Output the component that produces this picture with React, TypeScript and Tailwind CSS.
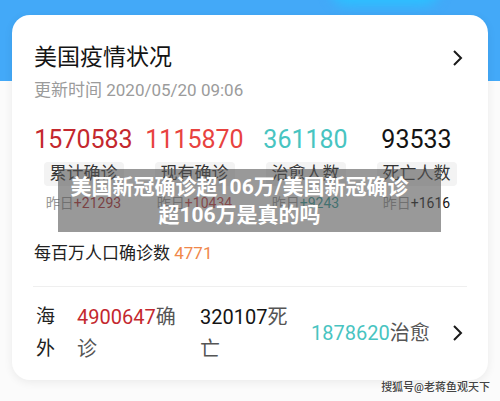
const STATS = [
  { value: "1570583", label: "累计确诊", delta: "+21293", color: "text-[#c4282e]", deltaColor: "text-[#b3262b]" },
  { value: "1115870", label: "现有确诊", delta: "+10434", color: "text-[#e8433f]", deltaColor: "text-[#c9383a]" },
  { value: "361180", label: "治愈人数", delta: "+9243", color: "text-[#48c4c1]", deltaColor: "text-[#2a9c99]" },
  { value: "93533", label: "死亡人数", delta: "+1616", color: "text-[#141414]", deltaColor: "text-[#141414]" },
];

function Chevron() {
  return (
    <svg width="12" height="20" viewBox="0 0 12 20" className="shrink-0">
      <polyline points="2,3 9,10 2,17" fill="none" stroke="#1a1a1a" strokeWidth="2" />
    </svg>
  );
}

export default function App() {
  return (
    <div
      className="relative h-[401px] w-[500px] overflow-hidden bg-[#fbfbfb]"
      style={{ fontFamily: "Roboto, 'Noto Sans CJK SC', sans-serif" }}
    >
      {/* blue header band */}
      <div className="absolute inset-x-0 top-0 h-[81px] bg-[#43a9f8]">
        <div className="absolute left-[330px] top-[-30px] h-[36px] w-[110px] rounded-full bg-[#2cc0ff] blur-[6px]" />
      </div>

      <div className="relative px-3 pt-[15px]">
        <div className="rounded-[18px] bg-white pb-[15px] shadow-[0_2px_10px_rgba(0,0,0,0.07)]">
          {/* header */}
          <div className="flex items-center justify-between pl-[22px] pr-[24px] pt-[28px]">
            <h1 className="text-[23px] leading-[30px] text-[#141414]">美国疫情状况</h1>
            <Chevron />
          </div>
          <p className="pl-[22px] pt-[5px] text-[17px] leading-[24px] text-[#9b9b9b]">更新时间 2020/05/20 09:06</p>

          {/* stats */}
          <div className="mt-[23px] grid grid-cols-4 px-4">
            {STATS.map((s) => (
              <div key={s.label} className="flex flex-col items-center">
                <span className={`text-[25px] leading-[30px] ${s.color}`}>{s.value}</span>
                <span className="mt-[7px] flex h-[24px] w-[80px] items-center justify-center rounded-[4px] bg-[#f3f3f3] text-[17px] text-[#333]">
                  {s.label}
                </span>
                <span className="mt-[7px] text-[14px] leading-[20px] text-[#999]">
                  昨日<span className={s.deltaColor}>{s.delta}</span>
                </span>
              </div>
            ))}
          </div>

          <p className="mt-[28px] pl-[22px] text-[17px] leading-[24px] text-[#222]">
            每百万人口确诊数 <span className="text-[#f0884a]">4771</span>
          </p>

          <div className="mx-[21px] mt-[21px] h-px bg-[#efefef]" />

          {/* overseas */}
          <div className="flex items-center pl-[24px] pr-[24px] pt-[14px] text-[20px] leading-[32px] text-[#222]">
            <div className="w-[41px] text-[19px]">
              <div>海</div>
              <div>外</div>
            </div>
            <div className="w-[123px]">
              <p className="w-[104px] text-[#555]">
                <span className="text-[#c4282e]">4900647</span>确诊
              </p>
            </div>
            <div className="w-[111px]">
              <p className="w-[92px] text-[#555]">
                <span className="text-[#141414]">320107</span>死亡
              </p>
            </div>
            <div className="flex-1 text-[#555]">
              <span className="text-[#48c4c1]">1878620</span>治愈
            </div>
            <Chevron />
          </div>
        </div>
      </div>

      {/* watermark */}
      <div className="absolute bottom-[5px] right-[10px] text-[11px] font-medium leading-[16px] text-[#444] [text-shadow:0_0_2px_#fff,0_0_2px_#fff]">
        搜狐号@老蒋鱼观天下
      </div>

      {/* headline overlay */}
      <div className="absolute left-[58px] top-[169px] flex h-[63px] w-[383px] flex-col items-center justify-center bg-[rgba(85,85,85,0.6)] pr-[20px] text-center text-[21px] font-bold leading-[28px] text-white">
        <span>美国新冠确诊超106万/美国新冠确诊</span>
        <span>超106万是真的吗</span>
      </div>
    </div>
  );
}
